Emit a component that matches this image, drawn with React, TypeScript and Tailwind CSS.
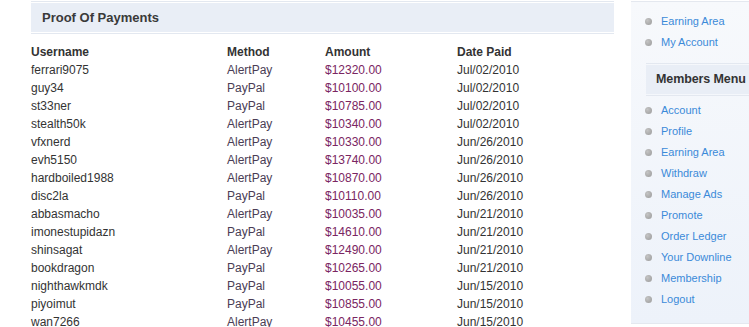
import React from "react";

const rows: [string, string, string, string][] = [
  ["ferrari9075", "AlertPay", "$12320.00", "Jul/02/2010"],
  ["guy34", "PayPal", "$10100.00", "Jul/02/2010"],
  ["st33ner", "PayPal", "$10785.00", "Jul/02/2010"],
  ["stealth50k", "AlertPay", "$10340.00", "Jul/02/2010"],
  ["vfxnerd", "AlertPay", "$10330.00", "Jun/26/2010"],
  ["evh5150", "AlertPay", "$13740.00", "Jun/26/2010"],
  ["hardboiled1988", "AlertPay", "$10870.00", "Jun/26/2010"],
  ["disc2la", "PayPal", "$10110.00", "Jun/26/2010"],
  ["abbasmacho", "AlertPay", "$10035.00", "Jun/21/2010"],
  ["imonestupidazn", "PayPal", "$14610.00", "Jun/21/2010"],
  ["shinsagat", "AlertPay", "$12490.00", "Jun/21/2010"],
  ["bookdragon", "PayPal", "$10265.00", "Jun/21/2010"],
  ["nighthawkmdk", "PayPal", "$10055.00", "Jun/15/2010"],
  ["piyoimut", "PayPal", "$10855.00", "Jun/15/2010"],
  ["wan7266", "AlertPay", "$10455.00", "Jun/15/2010"],
];

const topLinks = ["Earning Area", "My Account"];
const menuLinks = [
  "Account",
  "Profile",
  "Earning Area",
  "Withdraw",
  "Manage Ads",
  "Promote",
  "Order Ledger",
  "Your Downline",
  "Membership",
  "Logout",
];

function LinkItem({ label }: { label: string }) {
  return (
    <div className="flex h-[21px] items-center">
      <span className="ml-[14px] mr-[9px] h-[7px] w-[7px] rounded-full bg-[radial-gradient(circle_at_35%_35%,#c4c4c4,#9a9a9a)]" />
      <span className="whitespace-nowrap text-[11px] text-[#3b8ad9]">{label}</span>
    </div>
  );
}

export default function App() {
  return (
    <div
      className="flex h-[327px] w-[749px] overflow-hidden bg-white"
      style={{ fontFamily: '"Liberation Sans", Arial, sans-serif' }}
    >
      <div className="w-[614px] shrink-0 pl-[31px] pt-[1px]">
        <div className="border-y border-[#e3e8f0] py-[1px]">
          <div className="flex h-[29px] items-center bg-[#e9eef6] pl-[11px] text-[13px] font-bold text-[#3a3a3a]">
            Proof Of Payments
          </div>
        </div>
        <div className="mt-[9px] text-[12px]">
          <div className="flex h-[18px] items-center font-bold text-[#333]">
            <div className="w-[196px]">Username</div>
            <div className="w-[98px]">Method</div>
            <div className="w-[132px]">Amount</div>
            <div>Date Paid</div>
          </div>
          {rows.map((r) => (
            <div key={r[0]} className="flex h-[18px] items-center">
              <div className="w-[196px] text-[#333]">{r[0]}</div>
              <div className="w-[98px] text-[#4a3d55]">{r[1]}</div>
              <div className="w-[132px] text-[#7a2562]">{r[2]}</div>
              <div className="text-[#333]">{r[3]}</div>
            </div>
          ))}
        </div>
      </div>
      <div className="ml-[17px] w-[118px] shrink-0 self-start">
        <div className="mt-[1px] border-t border-b border-[#e4e8ef] bg-[linear-gradient(to_bottom,#f7f9fc,#edf2fa)] pb-[13px] pt-[9px]">
          {topLinks.map((l) => (
            <LinkItem key={l} label={l} />
          ))}
          <div className="ml-[15px] mt-[10px] border-y border-[#e3e8f0] py-[1px]">
            <div className="flex h-[29px] items-center whitespace-nowrap bg-[#e9eef6] pl-[10px] text-[12.5px] font-bold tracking-[-0.1px] text-[#333]">
              Members Menu
            </div>
          </div>
          <div className="mt-[4px]">
            {menuLinks.map((l) => (
              <LinkItem key={l} label={l} />
            ))}
          </div>
        </div>
      </div>
    </div>
  );
}
